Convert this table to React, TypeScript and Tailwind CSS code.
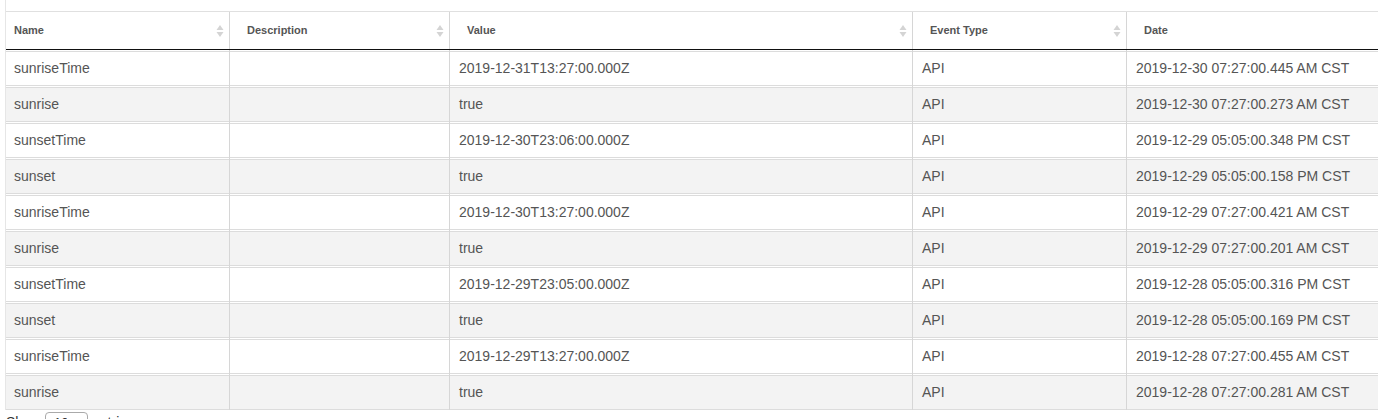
import React from 'react';

type Row = { name: string; description: string; value: string; type: string; date: string };

const rows: Row[] = [
  { name: 'sunriseTime', description: '', value: '2019-12-31T13:27:00.000Z', type: 'API', date: '2019-12-30 07:27:00.445 AM CST' },
  { name: 'sunrise', description: '', value: 'true', type: 'API', date: '2019-12-30 07:27:00.273 AM CST' },
  { name: 'sunsetTime', description: '', value: '2019-12-30T23:06:00.000Z', type: 'API', date: '2019-12-29 05:05:00.348 PM CST' },
  { name: 'sunset', description: '', value: 'true', type: 'API', date: '2019-12-29 05:05:00.158 PM CST' },
  { name: 'sunriseTime', description: '', value: '2019-12-30T13:27:00.000Z', type: 'API', date: '2019-12-29 07:27:00.421 AM CST' },
  { name: 'sunrise', description: '', value: 'true', type: 'API', date: '2019-12-29 07:27:00.201 AM CST' },
  { name: 'sunsetTime', description: '', value: '2019-12-29T23:05:00.000Z', type: 'API', date: '2019-12-28 05:05:00.316 PM CST' },
  { name: 'sunset', description: '', value: 'true', type: 'API', date: '2019-12-28 05:05:00.169 PM CST' },
  { name: 'sunriseTime', description: '', value: '2019-12-29T13:27:00.000Z', type: 'API', date: '2019-12-28 07:27:00.455 AM CST' },
  { name: 'sunrise', description: '', value: 'true', type: 'API', date: '2019-12-28 07:27:00.281 AM CST' },
];

const columns: { key: keyof Row; label: string }[] = [
  { key: 'name', label: 'Name' },
  { key: 'description', label: 'Description' },
  { key: 'value', label: 'Value' },
  { key: 'type', label: 'Event Type' },
  { key: 'date', label: 'Date' },
];

const grid = 'grid grid-cols-[223px_220px_463px_214px_330px]';

// little up/down sort arrows, same look as datatables
const SortIcon = () => (
  <svg width="8" height="14" viewBox="0 0 8 14" className="shrink-0">
    <path d="M4 1 L7.5 6 L0.5 6 Z" fill="#d4d4d4" />
    <path d="M4 13 L7.5 8 L0.5 8 Z" fill="#d4d4d4" />
  </svg>
);

const App = () => {
  return (
    <div className="w-[1378px] h-[419px] overflow-hidden bg-white text-[#555] font-['Liberation_Sans',Arial,sans-serif]">
      <div className="ml-[5px] border-l border-[#e6e6e6] pt-[11px]">
        {/* header */}
        <div className={`${grid} h-[39px] border-t border-b border-t-[#e0e0e0] border-b-[#111]`}>
          {columns.map((col, i) => (
            <div
              key={col.key}
              className={`flex items-center justify-between pr-[5px] text-[11px] font-bold ${
                i === 0 ? 'pl-[8px]' : 'pl-[17px] border-l border-[#d6d6d6]'
              }`}
            >
              <span>{col.label}</span>
              <SortIcon />
            </div>
          ))}
        </div>

        {/* body */}
        {rows.map((row, r) => (
          <div key={r} className={grid}>
            {columns.map((col, i) => (
              <div key={col.key} className={`pt-px ${i === 0 ? '' : 'border-l border-[#d6d6d6]'}`}>
                <div
                  className={`h-[35px] flex items-center border-y border-[#dcdcdc] text-[14px] whitespace-nowrap ${
                    r % 2 === 1 ? 'bg-[#f3f3f3]' : 'bg-white'
                  } ${i === 0 ? 'pl-[8px]' : 'pl-[9px]'}`}
                >
                  {row[col.key]}
                </div>
              </div>
            ))}
          </div>
        ))}
      </div>

      <div className="pl-[6px] pt-[2px] flex items-center gap-1 text-[14px] leading-5 text-[#333]">
        <span>Show</span>
        <select className="h-[20px] w-[43px] border border-[#aaa] rounded-sm text-[13px] px-1">
          <option>10</option>
        </select>
        <span>entries</span>
      </div>
    </div>
  );
};

export default App;
